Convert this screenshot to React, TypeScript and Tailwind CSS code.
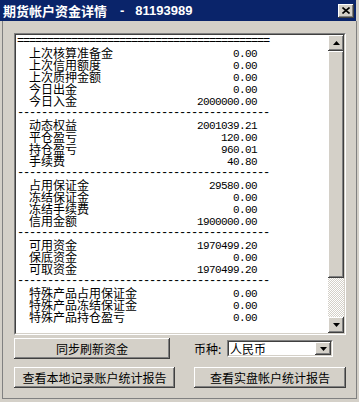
import React from "react";

/**
 * 期货帐户资金详情 — classic Win2000 style dialog with a fixed-width list.
 */

type Row = { sep: string } | { label: string; value: string };

const rows: Row[] = [
  { sep: "=" },
  { label: "上次核算准备金", value: "0.00" },
  { label: "上次信用额度", value: "0.00" },
  { label: "上次质押金额", value: "0.00" },
  { label: "今日出金", value: "0.00" },
  { label: "今日入金", value: "2000000.00" },
  { sep: "-" },
  { label: "动态权益", value: "2001039.21" },
  { label: "平仓盈亏", value: "120.00" },
  { label: "持仓盈亏", value: "960.01" },
  { label: "手续费", value: "40.80" },
  { sep: "-" },
  { label: "占用保证金", value: "29580.00" },
  { label: "冻结保证金", value: "0.00" },
  { label: "冻结手续费", value: "0.00" },
  { label: "信用金额", value: "1900000.00" },
  { sep: "-" },
  { label: "可用资金", value: "1970499.20" },
  { label: "保底资金", value: "0.00" },
  { label: "可取资金", value: "1970499.20" },
  { sep: "-" },
  { label: "特殊产品占用保证金", value: "0.00" },
  { label: "特殊产品冻结保证金", value: "0.00" },
  { label: "特殊产品持仓盈亏", value: "0.00" },
];

const raised =
  "bg-[#d4d0c8] shadow-[inset_-1px_-1px_#404040,inset_1px_1px_#ffffff,inset_-2px_-2px_#808080,inset_2px_2px_#d4d0c8]";

function Arrow({ up }: { up?: boolean }) {
  return (
    <svg width="7" height="4" viewBox="0 0 7 4">
      <path d={up ? "M3.5 0 L7 4 L0 4 Z" : "M0 0 L7 0 L3.5 4 Z"} fill="#000" />
    </svg>
  );
}

function WinButton({ width, children }: { width: string; children: React.ReactNode }) {
  return (
    <div className={`${raised} ${width} flex h-[21px] items-center justify-center text-[12px] leading-[12px]`}>
      {children}
    </div>
  );
}

export default function App() {
  return (
    <div className="h-[402px] w-[359px] overflow-hidden bg-[#d4d0c8] font-['Noto_Sans_CJK_SC',sans-serif] text-black">
      {/* title bar */}
      <div className="flex h-[21px] w-[356px] items-center justify-between bg-[#0a246a] pr-[2px] text-white">
        <div className="flex items-center pl-[3px] font-bold">
          <span className="text-[13px] leading-[14px]">期货帐户资金详情</span>
          <span className="ml-[13px] font-['Liberation_Sans',sans-serif] text-[13px] leading-[14px]">-</span>
          <span className="ml-[11px] font-['Liberation_Sans',sans-serif] text-[13px] leading-[14px]">81193989</span>
        </div>
        <div className={`${raised} flex h-[14px] w-[16px] items-center justify-center`}>
          <svg width="8" height="7" viewBox="0 0 8 7">
            <path d="M0.5 0.5 L7.5 6.5 M7.5 0.5 L0.5 6.5" stroke="#000" strokeWidth="1.6" />
          </svg>
        </div>
      </div>

      {/* client area */}
      <div className="ml-[2px] flex h-[378px] w-[355px] flex-col border-b border-l border-r border-[#808080]">
        {/* list box */}
        <div className="ml-[11px] mt-[12px] h-[302px] w-[332px] border border-b-white border-l-[#808080] border-r-white border-t-[#808080]">
          <div className="flex h-full w-full border border-b-[#d4d0c8] border-l-[#404040] border-r-[#d4d0c8] border-t-[#404040] bg-white">
            <div className="flex-1 overflow-hidden pl-[1px]">
              {rows.map((row, i) =>
                "sep" in row ? (
                  <div
                    key={i}
                    className="h-[12px] overflow-hidden whitespace-pre font-['Liberation_Mono',monospace] text-[12px] leading-[12px] tracking-[-1.2px]"
                  >
                    {row.sep.repeat(42)}
                  </div>
                ) : (
                  <div key={i} className="flex h-[12px] w-[240px] items-start justify-between">
                    <span className="pl-[12px] text-[12px] leading-[12px]">{row.label}</span>
                    <span className="pt-[2px] font-['Liberation_Mono',monospace] text-[11px] leading-[10px] tracking-[-0.6px]">
                      {row.value}
                    </span>
                  </div>
                )
              )}
            </div>
            {/* scrollbar */}
            <div className="flex w-[16px] flex-col">
              <div className={`${raised} flex h-[16px] items-center justify-center`}>
                <Arrow up />
              </div>
              <div className={`${raised} h-[227px]`} />
              <div className="flex-1 bg-[repeating-conic-gradient(#d4d0c8_0_25%,#ffffff_0_50%)] bg-[length:2px_2px]" />
              <div className={`${raised} flex h-[16px] items-center justify-center`}>
                <Arrow />
              </div>
            </div>
          </div>
        </div>

        {/* controls row 1 */}
        <div className="ml-[11px] mt-[3px] flex h-[21px] items-center">
          <WinButton width="w-[156px]">同步刷新资金</WinButton>
          <span className="ml-[24px] w-[33px] text-[12px] leading-[12px]">币种:</span>
          <div className="h-[17px] w-[106px] border border-b-white border-l-[#808080] border-r-white border-t-[#808080]">
            <div className="flex h-full border border-b-[#d4d0c8] border-l-[#404040] border-r-[#d4d0c8] border-t-[#404040] bg-white">
              <span className="flex-1 pl-[1px] text-[12px] leading-[13px]">人民币</span>
              <div className={`${raised} flex w-[16px] items-center justify-center`}>
                <Arrow />
              </div>
            </div>
          </div>
        </div>

        {/* controls row 2 */}
        <div className="ml-[11px] mt-[8px] flex gap-[19px]">
          <WinButton width="w-[161px]">查看本地记录账户统计报告</WinButton>
          <WinButton width="w-[152px]">查看实盘帐户统计报告</WinButton>
        </div>
      </div>
    </div>
  );
}
